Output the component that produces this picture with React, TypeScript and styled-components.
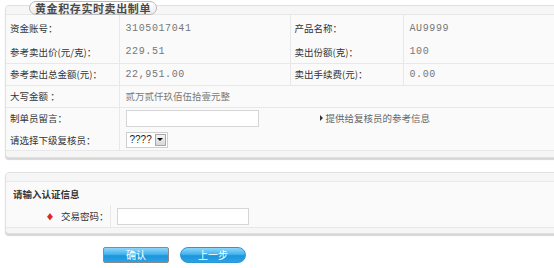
import React from 'react';
import styled, { createGlobalStyle } from 'styled-components';

const GlobalStyle = createGlobalStyle`
  html, body {
    margin: 0;
    padding: 0;
    background: #fff;
    overflow: hidden;
  }
  body {
    font-family: "Noto Sans CJK SC", "Noto Sans", sans-serif;
    font-size: 9.5px;
    color: #333;
  }
`;

const Page = styled.div`
  width: 554px;
  height: 268px;
  padding: 5px 0 0 5px;
  box-sizing: border-box;
`;

const Panel = styled.div<{ $gap?: number }>`
  position: relative;
  width: 560px;
  margin-top: ${(p) => p.$gap ?? 0}px;
  border: 1px solid #e0e0e0;
  border-radius: 4px;
  background: #fafafa;
  box-shadow: 0 2px 1px #d6d6d6;
`;

const TitleTab = styled.div`
  position: absolute;
  left: 23px;
  top: -5px;
  width: 128px;
  height: 14px;
  box-sizing: border-box;
  border: 1px solid #b9b9b9;
  border-radius: 7px;
  background: linear-gradient(#ffffff, #ececec);
  font-family: "Noto Sans CJK SC", sans-serif;
  font-weight: bold;
  font-size: 11px;
  line-height: 12px;
  color: #4a4a4a;
  text-align: center;
  letter-spacing: 0.6px;
`;

const Strip = styled.div<{ $h: number; $top?: boolean }>`
  height: ${(p) => p.$h}px;
  background: #f6f6f6;
  ${(p) => (p.$top ? 'border-bottom: 1px solid #e8e8e8;' : 'border-top: 1px solid #e8e8e8;')}
  border-radius: ${(p) => (p.$top ? '4px 4px 0 0' : '0 0 4px 4px')};
`;

const Table = styled.table`
  width: 100%;
  border-collapse: collapse;
  table-layout: fixed;
`;

const Row = styled.tr<{ $h?: number }>`
  height: ${(p) => p.$h ?? 22}px;
  & + & td {
    border-top: 1px solid #e8e8e8;
  }
`;

const Label = styled.td<{ $right?: boolean }>`
  padding: 0 0 0 4px;
  border-right: 1px solid #e8e8e8;
  color: #333;
  text-align: ${(p) => (p.$right ? 'right' : 'left')};
  ${(p) => (p.$right ? 'padding-right: 1px;' : '')}
  white-space: nowrap;
`;

const Value = styled.td<{ $mono?: boolean }>`
  padding: 0 0 0 6px;
  color: #777;
  font-family: ${(p) => (p.$mono ? '"Liberation Mono", monospace' : 'inherit')};
  font-size: ${(p) => (p.$mono ? '10px' : '9.5px')};
  letter-spacing: ${(p) => (p.$mono ? '0.6px' : '0')};
  border-right: 1px solid #e8e8e8;
  white-space: nowrap;
`;

const HeadCell = styled.td`
  padding-left: 7px;
  font-weight: bold;
  color: #333;
`;

const TextBox = styled.input<{ $w: number }>`
  width: ${(p) => p.$w}px;
  height: 17px;
  box-sizing: border-box;
  border: 1px solid #d6d6d6;
  background: #fff;
  margin: 0;
  padding: 0 3px;
  vertical-align: middle;
`;

const Hint = styled.span`
  margin-left: 61px;
  color: #666;
  vertical-align: middle;
  &::before {
    content: '';
    display: inline-block;
    margin-right: 3px;
    border-left: 3px solid #333;
    border-top: 3px solid transparent;
    border-bottom: 3px solid transparent;
    vertical-align: 1px;
  }
`;

const SelectBox = styled.div`
  display: inline-flex;
  align-items: center;
  height: 16px;
  box-sizing: border-box;
  border: 1px solid #cfcfcf;
  background: #fff;
  padding-left: 3px;
  gap: 3px;
  font-family: "Liberation Sans", sans-serif;
  font-size: 10px;
  color: #222;
  vertical-align: middle;
`;

const Arrow = styled.span`
  display: inline-flex;
  align-items: center;
  justify-content: center;
  width: 11px;
  height: 12px;
  margin-right: 1px;
  border: 1px solid #a8a8a8;
  background: linear-gradient(#f4f4f4, #d8d8d8);
  box-sizing: border-box;
  &::after {
    content: '';
    border-top: 3px solid #111;
    border-left: 3px solid transparent;
    border-right: 3px solid transparent;
  }
`;

const Star = styled.span`
  color: #e0262a;
  font-size: 8px;
  margin-right: 7px;
`;

const Buttons = styled.div`
  display: flex;
  gap: 11px;
  padding: 13px 0 0 98px;
`;

const Button = styled.button<{ $pill?: boolean }>`
  width: 66px;
  height: 16px;
  padding: 0;
  box-sizing: border-box;
  border: 1px solid ${(p) => (p.$pill ? '#2c96d6' : '#8a8a8a')};
  border-radius: ${(p) => (p.$pill ? '8px' : '2px')};
  background: linear-gradient(#8fd6fa 0%, #45b3ee 45%, #1d95dc 55%, #2aa2e6 100%);
  color: #fff;
  font-family: "Noto Sans CJK SC", sans-serif;
  font-size: 10px;
  line-height: 14px;
  cursor: pointer;
`;

export default function App() {
  return (
    <Page>
      <GlobalStyle />
      <Panel>
        <TitleTab>黄金积存实时卖出制单</TitleTab>
        <Strip $h={8} $top />
        <Table>
          <colgroup>
            <col width={113} />
            <col width={171} />
            <col width={113} />
            <col />
          </colgroup>
          <tbody>
            <Row $h={26}>
              <Label>资金账号：</Label>
              <Value $mono>3105017041</Value>
              <Label>产品名称：</Label>
              <Value $mono>AU9999</Value>
            </Row>
            <Row>
              <Label>参考卖出价(元/克)：</Label>
              <Value $mono>229.51</Value>
              <Label>卖出份额(克)：</Label>
              <Value $mono>100</Value>
            </Row>
            <Row>
              <Label>参考卖出总金额(元)：</Label>
              <Value $mono>22,951.00</Value>
              <Label>卖出手续费(元)：</Label>
              <Value $mono>0.00</Value>
            </Row>
            <Row>
              <Label>大写金额 ：</Label>
              <Value colSpan={3}>贰万贰仟玖佰伍拾壹元整</Value>
            </Row>
            <Row>
              <Label>制单员留言：</Label>
              <Value colSpan={3}>
                <TextBox $w={133} />
                <Hint>提供给复核员的参考信息</Hint>
              </Value>
            </Row>
            <Row $h={21}>
              <Label>请选择下级复核员：</Label>
              <Value colSpan={3}>
                <SelectBox>
                  ????
                  <Arrow />
                </SelectBox>
              </Value>
            </Row>
          </tbody>
        </Table>
        <Strip $h={6} />
      </Panel>

      <Panel $gap={14}>
        <Strip $h={8} $top />
        <Table>
          <colgroup>
            <col width={104} />
            <col />
          </colgroup>
          <tbody>
            <Row $h={23}>
              <HeadCell colSpan={2}>请输入认证信息</HeadCell>
            </Row>
            <Row>
              <Label $right>
                <Star>♦</Star>交易密码：
              </Label>
              <Value>
                <TextBox $w={132} type="password" />
              </Value>
            </Row>
          </tbody>
        </Table>
        <Strip $h={5} />
      </Panel>

      <Buttons>
        <Button>确认</Button>
        <Button $pill>上一步</Button>
      </Buttons>
    </Page>
  );
}
